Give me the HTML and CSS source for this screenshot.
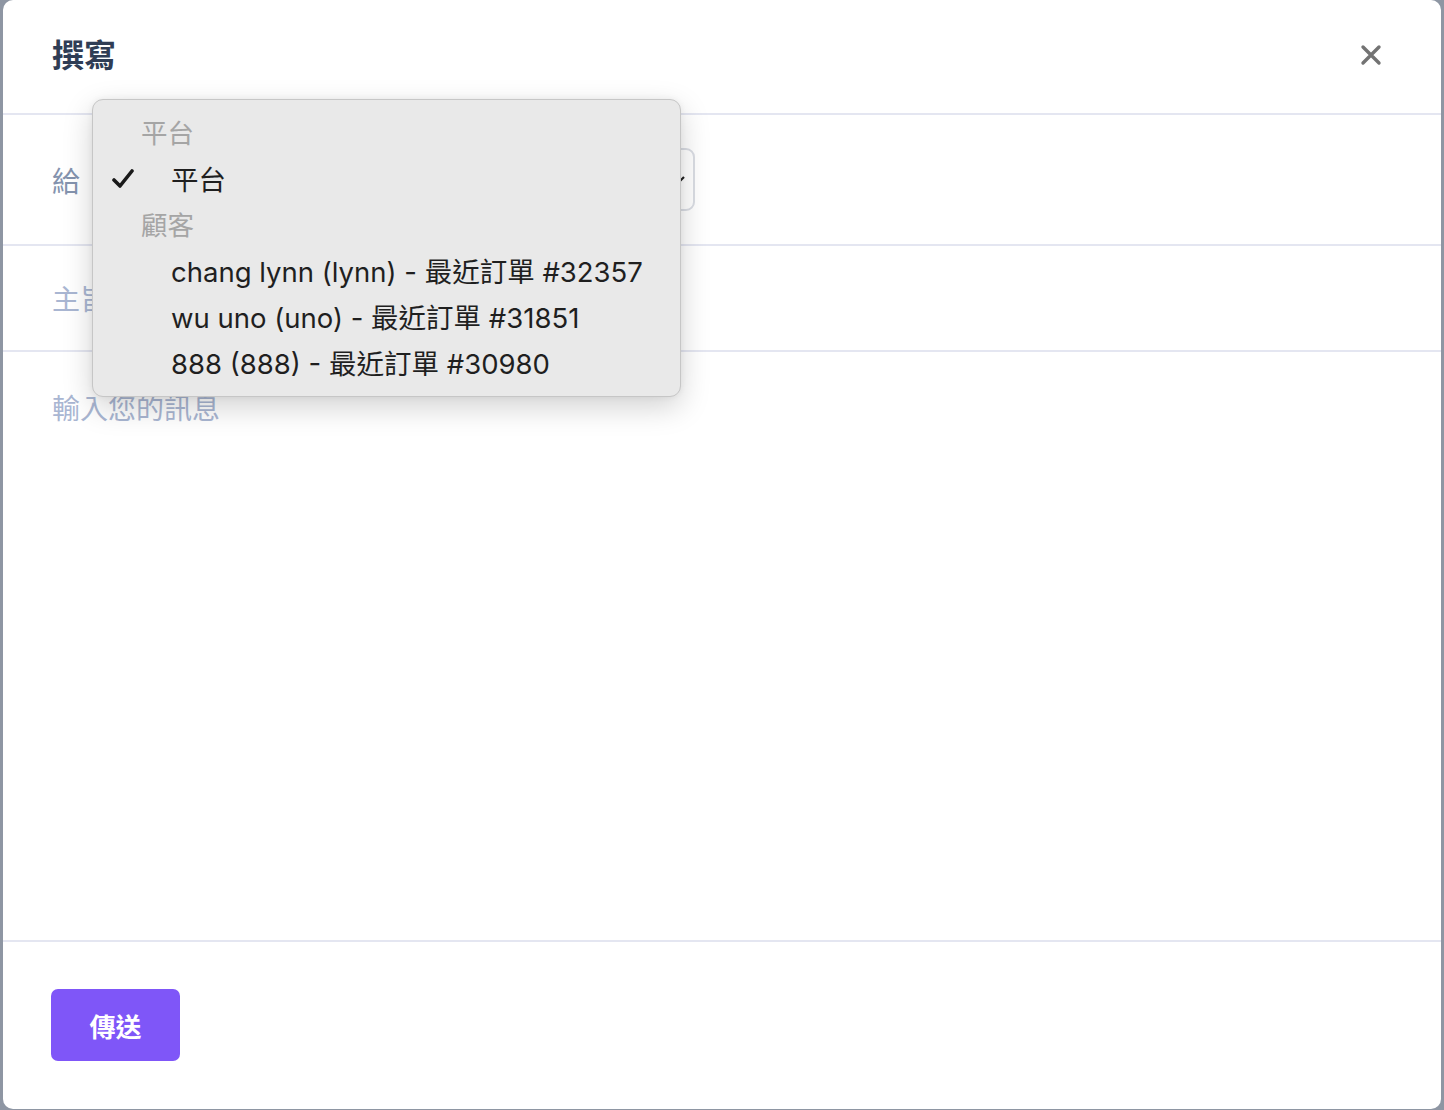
FILE: index.html
```html
<!DOCTYPE html>
<html lang="zh-Hant">
<head>
<meta charset="utf-8">
<title>撰寫</title>
<link rel="stylesheet" href="styles.css">
</head>
<body>
<div class="modal">
  <header class="modal-head">
    <h1 class="title">撰寫</h1>
    <button class="close" aria-label="close">
      <svg width="22" height="22" viewBox="0 0 22 22"><path d="M3 3 L19 19 M19 3 L3 19" stroke="#737373" stroke-width="3.4" stroke-linecap="round"/></svg>
    </button>
  </header>
  <div class="row to-row">
    <span class="label">給</span>
    <div class="select">
      <svg class="chev" width="16" height="10" viewBox="0 0 16 10"><path d="M2 2 L8 8 L14 2" fill="none" stroke="#222" stroke-width="2.2"/></svg>
    </div>
    <div class="menu">
      <div class="group">平台</div>
      <div class="opt checked">
        <svg class="check" width="22" height="20" viewBox="0 0 22 20"><path d="M2 11 L8 17 L20 2" fill="none" stroke="#1a1a1a" stroke-width="3.6" stroke-linecap="round" stroke-linejoin="round"/></svg>
        <span>平台</span>
      </div>
      <div class="group">顧客</div>
      <div class="opt"><span>chang lynn (lynn) - 最近訂單 #32357</span></div>
      <div class="opt"><span>wu uno (uno) - 最近訂單 #31851</span></div>
      <div class="opt"><span>888 (888) - 最近訂單 #30980</span></div>
    </div>
  </div>
  <div class="row subject-row">
    <span class="placeholder">主旨</span>
  </div>
  <div class="message">
    <span class="placeholder">輸入您的訊息</span>
  </div>
  <footer class="modal-foot">
    <button class="send">傳送</button>
  </footer>
</div>
</body>
</html>
```
FILE: styles.css
```css
* { box-sizing: border-box; }
html, body { margin: 0; height: 100%; }
body {
  background: #8e96a3;
  padding: 0 3px 1px 3px;
  font-family: "Noto Sans CJK TC", "Noto Sans", sans-serif;
}
.modal {
  background: #fff;
  height: 1109px;
  border-radius: 10px;
  display: flex;
  flex-direction: column;
  position: relative;
}
.modal-head {
  height: 115px;
  display: flex;
  align-items: center;
  justify-content: space-between;
  padding: 0 59px 8px 49px;
  border-bottom: 2px solid #e4e6f1;
}
.title {
  margin: 0;
  font-size: 32px;
  font-weight: 700;
  color: #2f3d55;
  letter-spacing: 0;
}
.close {
  background: none;
  border: 0;
  padding: 0;
  display: flex;
  margin-top: 4px;
}
.row {
  display: flex;
  align-items: center;
  padding: 0 49px;
  border-bottom: 2px solid #e4e6f1;
}
.to-row {
  height: 131px;
  position: relative;
}
.label {
  font-size: 28px;
  color: #8493ae;
  width: 88px;
}
.select {
  width: 555px;
  height: 63px;
  border: 2px solid #dadde4;
  border-radius: 9px;
  display: flex;
  align-items: center;
  justify-content: flex-end;
  padding: 0 7px 0 20px;
}
.subject-row {
  height: 106px;
}
.placeholder {
  font-size: 28px;
  color: #a9b6d2;
}
.message {
  flex: 1;
  padding: 35px 49px;
  border-bottom: 2px solid #e4e6f1;
}
.modal-foot {
  height: 167px;
  padding: 47px 48px;
}
.send {
  width: 129px;
  height: 72px;
  background: #7f56f8;
  border: 0;
  border-radius: 7px;
  color: #fff;
  font-family: "Noto Sans CJK TC", sans-serif;
  font-size: 26px;
  font-weight: 700;
}
.menu {
  position: absolute;
  left: 89px;
  top: -16px;
  width: 589px;
  height: 298px;
  background: #e9e9e9;
  border: 1px solid #c6c6c6;
  border-radius: 11px;
  box-shadow: 0 10px 30px rgba(0,0,0,0.18), 0 0 6px rgba(0,0,0,0.06);
  padding: 9px 0 0 0;
  font-family: "Inter", "Noto Sans CJK TC", sans-serif;
  font-size: 27.5px;
  color: #1f1f1f;
  z-index: 5;
}
.group {
  height: 46px;
  line-height: 46px;
  padding-left: 48px;
  color: #a5a5a5;
  font-size: 26.5px;
  font-family: "Noto Sans CJK TC", sans-serif;
}
.opt {
  height: 46px;
  display: flex;
  align-items: center;
  padding-left: 78px;
  position: relative;
}
.check {
  position: absolute;
  left: 19px;
  top: 14px;
}
```
